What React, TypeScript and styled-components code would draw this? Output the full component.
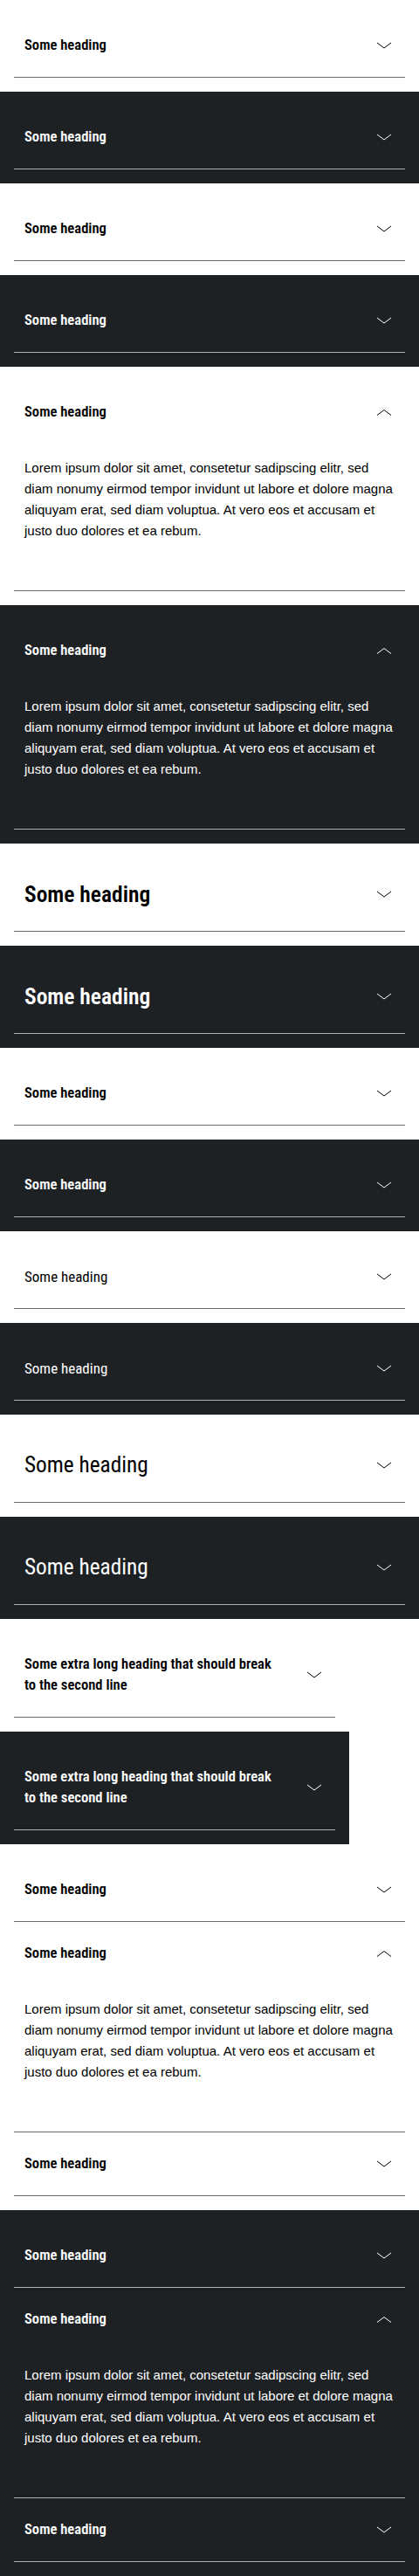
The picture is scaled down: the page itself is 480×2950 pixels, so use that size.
import React from "react";
import styled, { createGlobalStyle } from "styled-components";

type Tone = "light" | "dark";
type Size = "small" | "medium";
type Weight = "bold" | "regular";

const palette = {
  light: { bg: "#ffffff", text: "#000000", line: "#6b6d70" },
  dark: { bg: "#1e2124", text: "#ffffff", line: "#b0b1b2" },
};

// heading font sizes by weight and size
const headingSize = {
  bold: { small: "16.6px", medium: "25.5px" },
  regular: { small: "17px", medium: "25.3px" },
};

const LOREM =
  "Lorem ipsum dolor sit amet, consetetur sadipscing elitr, sed diam nonumy eirmod tempor invidunt ut labore et dolore magna aliquyam erat, sed diam voluptua. At vero eos et accusam et justo duo dolores et ea rebum.";

const GlobalStyle = createGlobalStyle`
  html, body {
    margin: 0;
    padding: 0;
    background: #ffffff;
  }
  * {
    box-sizing: border-box;
  }
`;

const Chevron = ({ open }: { open?: boolean }) => (
  <svg width="24" height="24" viewBox="0 0 24 24" fill="none" aria-hidden="true">
    <polyline
      points={open ? "4,15.5 12,9.5 20,15.5" : "4,9 12,15 20,9"}
      stroke="currentColor"
      strokeWidth="1"
      strokeLinejoin="miter"
    />
  </svg>
);

type ItemData = {
  heading: string;
  open?: boolean;
};

type AccordionItemProps = ItemData & {
  tone: Tone;
  size: Size;
  weight: Weight;
};

const AccordionItem = ({ heading, open, tone, size, weight }: AccordionItemProps) => (
  <Item $tone={tone}>
    <HeadingButton type="button" aria-expanded={!!open} $size={size} $weight={weight}>
      <HeadingText>{heading}</HeadingText>
      <IconSlot>
        <Chevron open={open} />
      </IconSlot>
    </HeadingButton>
    {open && <Content>{LOREM}</Content>}
  </Item>
);

type PanelData = {
  tone: Tone;
  size?: Size;
  weight?: Weight;
  narrow?: boolean;
  items: ItemData[];
};

const one = (heading = "Some heading", open = false): ItemData[] => [{ heading, open }];
const longHeading = "Some extra long heading that should break to the second line";
const group: ItemData[] = [
  { heading: "Some heading" },
  { heading: "Some heading", open: true },
  { heading: "Some heading" },
];

const panels: PanelData[] = [
  { tone: "light", items: one() },
  { tone: "dark", items: one() },
  { tone: "light", items: one() },
  { tone: "dark", items: one() },
  { tone: "light", items: one("Some heading", true) },
  { tone: "dark", items: one("Some heading", true) },
  { tone: "light", size: "medium", items: one() },
  { tone: "dark", size: "medium", items: one() },
  { tone: "light", items: one() },
  { tone: "dark", items: one() },
  { tone: "light", weight: "regular", items: one() },
  { tone: "dark", weight: "regular", items: one() },
  { tone: "light", size: "medium", weight: "regular", items: one() },
  { tone: "dark", size: "medium", weight: "regular", items: one() },
  { tone: "light", narrow: true, items: one(longHeading) },
  { tone: "dark", narrow: true, items: one(longHeading) },
  { tone: "light", items: group },
  { tone: "dark", items: group },
];

const App = () => (
  <>
    <GlobalStyle />
    <Page>
      {panels.map((panel, i) => (
        <Panel key={i} $tone={panel.tone} $narrow={panel.narrow}>
          {panel.items.map((item, j) => (
            <AccordionItem
              key={j}
              {...item}
              tone={panel.tone}
              size={panel.size ?? "small"}
              weight={panel.weight ?? "bold"}
            />
          ))}
        </Panel>
      ))}
    </Page>
  </>
);

const Page = styled.main`
  display: flex;
  flex-direction: column;
  align-items: flex-start;
  width: 480px;
`;

const Panel = styled.section<{ $tone: Tone; $narrow?: boolean }>`
  display: flex;
  flex-direction: column;
  width: ${(p) => (p.$narrow ? "400px" : "100%")};
  padding: 16px;
  background: ${(p) => palette[p.$tone].bg};
  color: ${(p) => palette[p.$tone].text};
`;

const Item = styled.div<{ $tone: Tone }>`
  border-bottom: 1px solid ${(p) => palette[p.$tone].line};
`;

const HeadingButton = styled.button<{ $size: Size; $weight: Weight }>`
  display: flex;
  align-items: center;
  justify-content: space-between;
  gap: 24px;
  width: 100%;
  margin: 0;
  padding: 24px 12px;
  border: 0;
  background: transparent;
  color: inherit;
  text-align: left;
  cursor: pointer;
  font-family: "Roboto Condensed", "Liberation Sans Narrow", "DejaVu Sans Condensed", "Liberation Sans", sans-serif;
  font-stretch: condensed;
  font-weight: ${(p) => (p.$weight === "bold" ? 600 : 400)};
  font-size: ${(p) => headingSize[p.$weight][p.$size]};
  line-height: ${(p) => (p.$size === "medium" ? "36px" : "24px")};
`;

const HeadingText = styled.span`
  flex: 1;
  min-width: 0;
`;

const IconSlot = styled.span`
  display: flex;
  flex-shrink: 0;
  width: 24px;
  height: 24px;

  svg {
    display: block;
  }
`;

const Content = styled.div`
  padding: 16px 12px 56px;
  font-family: "Liberation Sans", Arial, sans-serif;
  font-size: 15px;
  line-height: 24px;
`;

export default App;
